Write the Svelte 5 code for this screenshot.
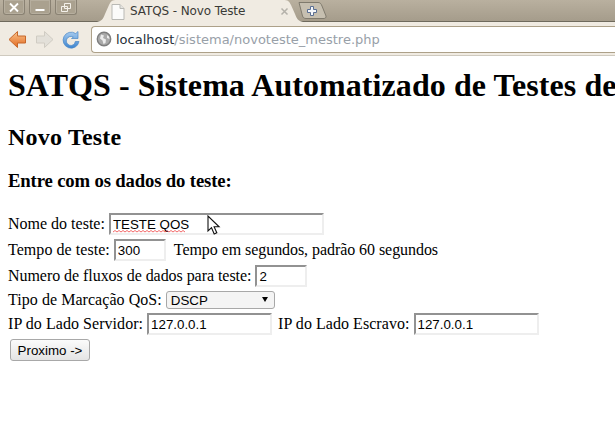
<script lang="ts">
  const title = 'SATQS - Sistema Automatizado de Testes de QoS';
</script>

<div class="window">
  <header class="tabstrip">
    <div class="winbtns">
      <span class="winbtn">
        <svg width="12" height="11" viewBox="0 0 12 11"><path d="M2 1.500l8 8M10 1.500l-8 8" stroke="#fff" stroke-width="1.800" fill="none" /></svg>
      </span>
      <span class="winbtn">
        <svg width="12" height="11" viewBox="0 0 12 11"><path d="M1.500 8h9" stroke="#fff" stroke-width="2" fill="none" /></svg>
      </span>
      <span class="winbtn">
        <svg width="12" height="11" viewBox="0 0 12 11"><path d="M4.500 1.500h6v5h-6zM1.500 4.500h6v5h-6z" stroke="#f4f1ea" stroke-width="1" fill="none" /></svg>
      </span>
    </div>
    <div class="tab">
      <svg class="tab-shape" width="206" height="22" viewBox="0 0 206 22">
        <path d="M0 22C5 21 6 19 8 14L12 5C14 1 15 0 20 0H186C191 0 192 1 194 5L198 14C200 19 201 21 206 22Z" fill="#f0ebe2" />
      </svg>
      <svg class="favicon" width="14" height="16" viewBox="0 0 14 16">
        <path d="M1 .5h8l4 4v11H1z" fill="#fbfbfa" stroke="#b9b9b5" />
        <path d="M9 .5v4h4" fill="#e4e4e0" stroke="#b9b9b5" />
      </svg>
      <span class="tab-title">SATQS - Novo Teste</span>
      <svg class="tab-close" width="9" height="9" viewBox="0 0 9 9"><path d="M1.500 1.500l6 6M7.500 1.500l-6 6" stroke="#b4b1aa" stroke-width="1.500" fill="none" /></svg>
    </div>
    <svg class="newtab" width="29" height="17" viewBox="0 0 29 17">
      <path d="M1 .5H20C22 .5 23 1.500 24 4L28 14C28.500 15.500 27 16.500 26 16.500H8C6 16.500 5 15.500 4.500 14L1 .5Z" fill="#c6bfb0" stroke="#7f7a6d" />
      <path d="M12.500 4.500h3v3h3v3h-3v3h-3v-3h-3v-3h3z" fill="#f5f7fb" stroke="#5a6f92" />
    </svg>
  </header>

  <nav class="toolbar">
    <svg class="navicon" width="19" height="19" viewBox="0 0 19 19">
      <defs>
        <linearGradient id="back" x1="0" y1="0" x2="0" y2="1">
          <stop offset="0" stop-color="#f9c48d" />
          <stop offset="1" stop-color="#e2691f" />
        </linearGradient>
      </defs>
      <path d="M9.500 1.500L1 9.500l8.500 8v-4.500h8V6h-8z" fill="url(#back)" stroke="#c7672a" />
    </svg>
    <svg class="navicon" width="19" height="19" viewBox="0 0 19 19">
      <path d="M9.500 1.500L18 9.500l-8.500 8v-4.500h-8V6h8z" fill="#e3e0d9" stroke="#d0ccc3" />
    </svg>
    <svg class="navicon" width="19" height="19" viewBox="0 0 19 19">
      <defs>
        <linearGradient id="reload" x1="0" y1="0" x2="0" y2="1">
          <stop offset="0" stop-color="#a9cdf0" />
          <stop offset="1" stop-color="#3d84cf" />
        </linearGradient>
      </defs>
      <path d="M16 8.500V1.500l-2.300 2.100A8 8 0 1 0 17 11.500h-3.700a4.500 4.500 0 1 1-2-4.300L9.500 8.500z" fill="url(#reload)" stroke="#4a88c7" stroke-width=".7" />
    </svg>
    <div class="omnibox">
      <svg class="globe" width="16" height="16" viewBox="0 0 16 16">
        <circle cx="8" cy="8" r="6.700" fill="#a9a9a9" stroke="#7e7e7e" stroke-width="1.400" />
        <path d="M5 3.500l3 1-1 2.500 3 1.500-.5 3.500-2 1-1-3.500-2.500-2zM11 4l2 1.500.5 2.500-2.500-1z" fill="#ececec" />
      </svg>
      <span class="url"><span class="host">localhost</span>/sistema/novoteste_mestre.php</span>
    </div>
  </nav>

  <main class="page">
    <h1>{title}</h1>
    <h2>Novo Teste</h2>
    <h3>Entre com os dados do teste:</h3>
    <form>
      <div class="row">
        <span class="flat">Nome do teste:</span>
        <span class="nome-wrap">
          <input class="nome" type="text" value="TESTE QOS" />
          <svg class="squiggle" width="76" height="3" viewBox="0 0 76 3">
            <path d="M0 2l2-1.500 2 1.500 2-1.500 2 1.500 2-1.500 2 1.500 2-1.500 2 1.500 2-1.500 2 1.500 2-1.500 2 1.500 2-1.500 2 1.500 2-1.500 2 1.500 2-1.500 2 1.500 2-1.500 2 1.500 2-1.500 2 1.500 2-1.500 2 1.500 2-1.500 2 1.500 2-1.500 2 1.500 2-1.500 2 1.500 2-1.500 2 1.500 2-1.500 2 1.500 2-1.500 2 1.500" stroke="#e44" stroke-width=".8" fill="none" />
          </svg>
          <svg class="cursor" width="14" height="21" viewBox="0 0 14 21">
            <path d="M1 1v15l3.500-3.300 2.700 6.300 2.600-1.200-2.700-6h5z" fill="#fff" stroke="#111" stroke-width="1.100" />
          </svg>
        </span>
      </div>
      <div class="row">
        <span>Tempo de teste:</span>
        <input class="curto" type="text" value="300" />
        <span class="hint">Tempo em segundos, padrão 60 segundos</span>
      </div>
      <div class="row">
        <span class="tight">Numero de fluxos de dados para teste:</span>
        <input class="curto" type="text" value="2" />
      </div>
      <div class="row">
        <span>Tipo de Marcação QoS:</span>
        <span class="select-wrap">
          <select>
            <option>DSCP</option>
          </select>
        </span>
      </div>
      <div class="row">
        <span>IP do Lado Servidor:</span>
        <input class="ip" type="text" value="127.0.0.1" />
        <span class="second">IP do Lado Escravo:</span>
        <input class="ip" type="text" value="127.0.0.1" />
      </div>
      <div class="row">
        <button type="button">Proximo -&gt;</button>
      </div>
    </form>
  </main>
</div>

<style>
  :global(body) {
    margin: 0;
    background: #fff;
  }

  .window {
    width: 615px;
    height: 426px;
    overflow: hidden;
    display: flex;
    flex-direction: column;
  }

  .tabstrip {
    height: 22px;
    flex: none;
    display: flex;
    align-items: flex-start;
    padding-left: 3px;
    background: linear-gradient(180deg, #b9b09f 0%, #a59c8b 100%);
    border-bottom: 1px solid #6f6a5d;
    box-sizing: border-box;
  }

  .winbtns {
    display: flex;
    gap: 4px;
    width: 94px;
    flex: none;
  }

  .winbtn {
    width: 22px;
    height: 15px;
    box-sizing: border-box;
    display: flex;
    align-items: center;
    justify-content: center;
    background: #aaa18f;
    border: 1px solid #8a8273;
    border-top: none;
    border-radius: 0 0 3px 3px;
    box-shadow: inset 0 0 0 1px rgba(255, 255, 255, 0.14);
  }

  .tab {
    position: relative;
    width: 206px;
    height: 22px;
    flex: none;
    display: flex;
    align-items: center;
    padding-left: 14px;
    box-sizing: border-box;
    margin-right: -5px;
  }

  .tab-shape {
    position: absolute;
    left: 0;
    top: 0;
  }

  .favicon,
  .tab-title,
  .tab-close {
    position: relative;
  }

  .favicon {
    margin-top: 1px;
  }

  .tab-title {
    margin-left: 5px;
    font: 12px "DejaVu Sans", sans-serif;
    letter-spacing: -0.1px;
    color: #3a3a36;
    white-space: nowrap;
    width: 150px;
  }

  .tab-close {
    margin-top: 1px;
  }

  .newtab {
    flex: none;
    margin-top: 2px;
  }

  .toolbar {
    height: 34px;
    flex: none;
    box-sizing: border-box;
    display: flex;
    align-items: center;
    padding: 1px 0 0 8px;
    gap: 8px;
    background: #f0ebe2;
    border-bottom: 1px solid #cfcabf;
  }

  .navicon {
    flex: none;
  }

  .omnibox {
    flex: 1;
    height: 27px;
    box-sizing: border-box;
    margin-left: 2px;
    display: flex;
    align-items: center;
    padding-left: 4px;
    background: #fff;
    border: 1px solid #ada189;
    border-right: none;
    border-radius: 4px 0 0 4px;
  }

  .globe {
    flex: none;
  }

  .url {
    margin-left: 4px;
    font: 13px "DejaVu Sans", sans-serif;
    color: #98a0a8;
    white-space: nowrap;
  }

  .host {
    color: #26303a;
  }

  .page {
    flex: 1;
    padding: 0 8px;
    font: 16px/18px "Liberation Serif", serif;
    letter-spacing: 0.05px;
    color: #000;
    white-space: nowrap;
  }

  h1 {
    margin: 11px 0 0;
    font-size: 32px;
    line-height: 37px;
    letter-spacing: 0.07px;
  }

  h2 {
    margin: 20px 0 0;
    font-size: 24px;
    line-height: 27px;
    letter-spacing: 0.2px;
  }

  h3 {
    margin: 19px 0 0;
    font-size: 18.72px;
    line-height: 21px;
    letter-spacing: -0.15px;
  }

  form {
    margin-top: 22px;
    display: flex;
    flex-direction: column;
    gap: 4px;
  }

  .row {
    display: flex;
    align-items: center;
    gap: 4px;
  }

  .flat {
    letter-spacing: 0;
  }

  .tight {
    letter-spacing: -0.05px;
  }

  .hint {
    margin-left: 4px;
    letter-spacing: -0.06px;
  }

  .second {
    margin-left: 2px;
  }

  input {
    font: 13.333px "Liberation Sans", sans-serif;
    box-sizing: border-box;
    height: 22px;
    padding: 1px 2px;
    margin: 0;
    color: #000;
    border: 2px solid;
    border-color: #929292 #eeeeee #eeeeee #929292;
    background: #fff;
  }

  .nome {
    display: block;
    width: 215px;
  }

  .nome-wrap {
    position: relative;
    display: block;
  }

  .squiggle {
    position: absolute;
    left: 4px;
    top: 17px;
  }

  .cursor {
    position: absolute;
    left: 98px;
    top: 2px;
  }

  .curto {
    width: 52px;
  }

  .ip {
    width: 125px;
  }

  .select-wrap {
    position: relative;
    display: block;
  }

  .select-wrap::after {
    content: "";
    position: absolute;
    right: 7px;
    top: 6px;
    border-left: 3px solid transparent;
    border-right: 3px solid transparent;
    border-top: 5px solid #000;
    pointer-events: none;
  }

  select {
    appearance: none;
    display: block;
    font: 13.333px "Liberation Sans", sans-serif;
    width: 109px;
    height: 18px;
    margin: 0;
    padding: 0 0 0 4px;
    color: #000;
    background: #f4f4f4;
    border: 1px solid #a8a8a8;
    border-radius: 3px;
  }

  button {
    font: 13.333px "Liberation Sans", sans-serif;
    height: 22px;
    width: 80px;
    margin: 0 0 0 2px;
    padding: 0;
    color: #000;
    background: linear-gradient(180deg, #fbfbfb, #e4e4e4);
    border: 1px solid #a8a8a8;
    border-radius: 3px;
  }
</style>
